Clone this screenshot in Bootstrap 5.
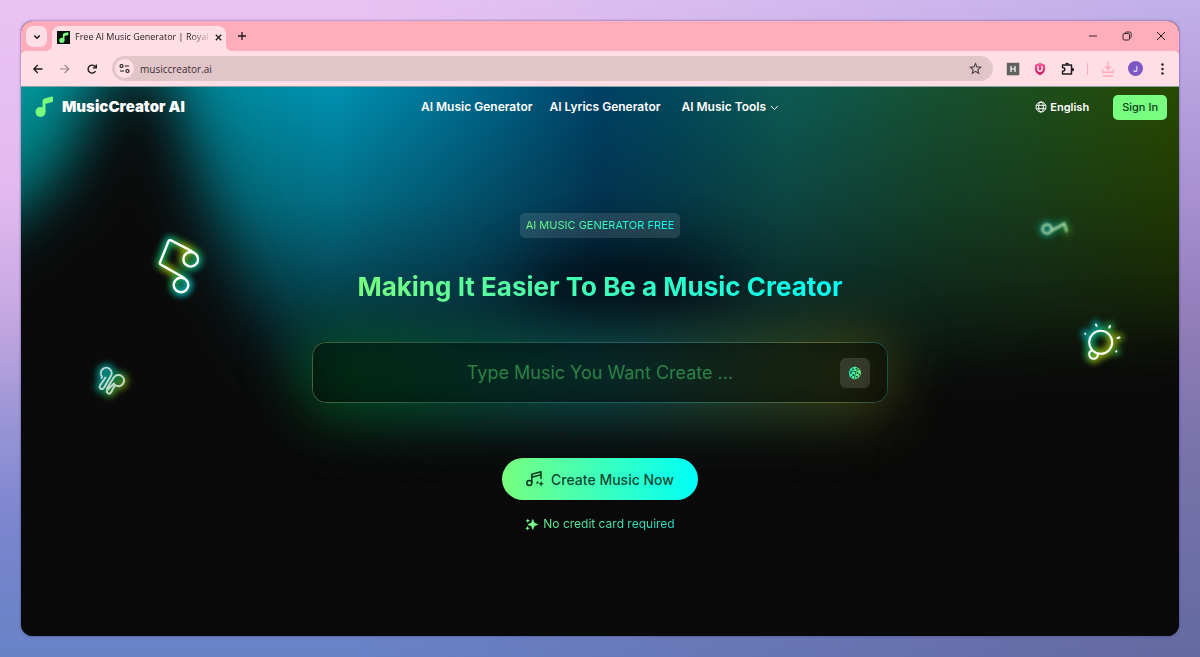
<!DOCTYPE html>
<html lang="en">
<head>
<meta charset="utf-8">
<meta name="viewport" content="width=device-width, initial-scale=1">
<title>Free AI Music Generator | Royalty Free</title>
<link href="https://cdn.jsdelivr.net/npm/bootstrap@5.3.0/dist/css/bootstrap.min.css" rel="stylesheet">
<style>
:root { --mint: #78ff7f; --aqua: #00fff7; --ink: #1d1b1e; }
body {
  position: relative; isolation: isolate; min-height: 100vh; padding: 21px;
  font-family: Inter, "Liberation Sans", sans-serif;
  background: linear-gradient(180deg, #e9c3f2 0%, #e3baef 28%, #c8a8e2 47%, #9a95d6 64%, #7b86cf 79%, #6882c6 100%);
}
body::before {
  content: ""; position: absolute; inset: 0; z-index: -1;
  background: linear-gradient(180deg, #c2b0ea 0%, #a890d2 30%, #8f7cb8 50%, #7873aa 70%, #646aa2 100%);
  -webkit-mask-image: linear-gradient(90deg, transparent 30%, #000 96%); mask-image: linear-gradient(90deg, transparent 30%, #000 96%);
}
button { color: inherit; }
.btn-plain { border: 0; background: none; padding: 0; line-height: 1; display: flex; align-items: center; justify-content: center; }
.app-window { min-height: calc(100vh - 42px); border-radius: 12px; background: #0a0a0a; box-shadow: 0 0 2px 1px rgba(70, 60, 120, .35); }

/* browser frame */
.tab-strip { height: 30px; background: #ffacbb; color: var(--ink); padding: 5px 5px 0; }
.tab-search { width: 21px; height: 21px; border-radius: 7px; background: #ffdfe5; }
.tab-open { position: relative; width: 174px; height: 25px; margin-left: 5px; padding: 0 7px 3px 5px; gap: 5px; border-radius: 8px 8px 0 0; background: #ffdfe5; }
.tab-open::before, .tab-open::after { content: ""; position: absolute; bottom: 0; width: 6px; height: 6px; }
.tab-open::before { left: -6px; background: radial-gradient(circle at 0 0, transparent 6px, #ffdfe5 6px); }
.tab-open::after { right: -6px; background: radial-gradient(circle at 100% 0, transparent 6px, #ffdfe5 6px); }
.tab-title { font: 9px/16px "Open Sans", sans-serif; white-space: nowrap; -webkit-mask-image: linear-gradient(90deg, #000 86%, transparent 102%); mask-image: linear-gradient(90deg, #000 86%, transparent 102%); }
.win-controls { gap: 22px; padding-right: 7px; height: 20px; }
.strip-wrap { background: #ffacbb; }
.tool-bar { height: 36px; padding: 0 9px 0 10px; background: #ffdfe5; color: var(--ink); border-bottom: 1px solid #8fa0a4; border-radius: 5px 5px 0 0; }
.nav-arrows { gap: 13px; margin-right: 13px; }
.address { height: 25px; border-radius: 13px; background: #e1c5c9; padding: 0 11px 0 3px; }
.address input { border: 0; background: none; padding: 0; outline: 0; font: 10px/16px "Open Sans", sans-serif; color: #3b3034; }
.site-info { width: 19px; height: 19px; border-radius: 50%; background: #ffdfe5; margin-right: 6px; }
.ext-row { margin-left: 13px; }
.ext-row > * { width: 14px; height: 16px; margin-right: 13px; }
.ext-row > *:last-child { margin-right: 0; }
.ext-row .bar { width: 1px; height: 12px; background: #ffacbb; }
.avatar { width: 15px !important; height: 15px !important; border-radius: 50%; background: #7e57c2; color: #fff; font-size: 8px; }

/* page */
.site { position: relative; color: #fff; isolation: isolate; overflow: hidden; }
.aurora { position: absolute; inset: 0; width: 100%; height: 100%; z-index: -1; }
.site-nav { height: 40px; padding: 0 12px 0 14px; font-size: 12px; font-weight: 600; }
.site-nav a { color: #fff; text-decoration: none; }
.brand { gap: 9px; font-size: 15px; line-height: 20px; font-weight: 900; }
.menu { gap: 17px; }
.lang { gap: 3px; margin-right: 24px; font-size: 11px; }
.sign-in { height: 25px; padding: 0 9px; border: 0; border-radius: 5px; background: var(--mint); color: #0d3d1c; font-size: 11px; font-weight: 500; }
.grad-text { background: linear-gradient(90deg, var(--mint), var(--aqua)); -webkit-background-clip: text; background-clip: text; color: transparent; }
.hero { padding: 86px 16px 0; }
.tag-pill { height: 25px; padding: 0 6px; border-radius: 5px; background: rgba(255, 255, 255, .12); font-size: 11px; line-height: 25px; }
.hero h1 { margin: 30px 0 0; font-size: 26px; line-height: 38px; font-weight: 700; }
.prompt { position: relative; width: 576px; max-width: 100%; height: 61px; margin-top: 36px; border-radius: 14px; background: rgba(0, 0, 0, .45); }
.prompt-edge { position: absolute; inset: 0; border-radius: 14px; padding: 1px; pointer-events: none;
  background: linear-gradient(90deg, #3f6538, #1d5c4a 30%, #1d6068 60%, #5e6430 90%, #17504e);
  -webkit-mask: linear-gradient(#000 0 0) content-box, linear-gradient(#000 0 0); -webkit-mask-composite: xor; mask-composite: exclude; }
.prompt input { border: 0; outline: 0; background: none; color: #9fffa8; font-size: 18px; padding: 0 18px 0 66px; }
.prompt input::placeholder { color: #2c8046; opacity: 1; }
.dice { width: 30px; height: 30px; margin-right: 18px; border-radius: 6px; background: rgba(255, 255, 255, .13); }
.glow { position: absolute; inset: -12px -4px -14px -8px; z-index: -1; filter: blur(28px); border-radius: 30px;
  background: linear-gradient(90deg, rgba(0, 90, 30, .8), rgba(14, 92, 90, .8) 50%, rgba(70, 70, 10, .85)); }
.cta { height: 42px; margin-top: 55px; padding: 0 24px; gap: 7px; border: 0; border-radius: 21px; background: linear-gradient(90deg, var(--mint), var(--aqua)); color: #0d4a34; font-size: 14px; font-weight: 500; }
.fine-note { margin-top: 15px; gap: 5px; font-size: 12px; line-height: 18px; }
.fine-note span { background-image: linear-gradient(90deg, #6df59a, #22dccb); }

/* neon ornaments over the backdrop */
.floater { position: absolute; overflow: visible; pointer-events: none; fill: none; stroke-linecap: round; stroke-linejoin: round; }
.floater .halo { stroke: url(#neon); stroke-width: 8; filter: url(#halo); }
.floater .line { stroke: #fff; stroke-width: 2; }
.fl-notes { left: 10.7%; top: 25.2%; }
.fl-notes .line { stroke-width: 2.4; }
.fl-buds { left: 6%; top: 49.3%; }
.fl-key { right: 9.3%; top: 23.3%; }
.fl-key .line { stroke: #d5f5c0; stroke-width: 2.6; }
.fl-bulb { right: 4.7%; top: 41.4%; }
</style>
</head>
<body>
<svg width="0" height="0" class="position-absolute" aria-hidden="true">
  <defs>
    <linearGradient id="neon" gradientUnits="userSpaceOnUse" x1="4" y1="28" x2="24" y2="44" spreadMethod="reflect"><stop offset="0" stop-color="#00b4c0"/><stop offset=".5" stop-color="#12a050"/><stop offset="1" stop-color="#a4b000"/></linearGradient>
    <linearGradient id="mintAqua" x1="0" y1="0" x2="1" y2="0"><stop offset="0" stop-color="#2df5c0"/><stop offset="1" stop-color="#78ff7f"/></linearGradient>
    <filter id="halo" filterUnits="userSpaceOnUse" x="-30" y="-30" width="140" height="140" color-interpolation-filters="sRGB"><feGaussianBlur stdDeviation="3"/></filter>
    <filter id="soft" filterUnits="userSpaceOnUse" x="-20" y="-20" width="90" height="90" color-interpolation-filters="sRGB"><feGaussianBlur stdDeviation=".5"/></filter>
    <filter id="softer" filterUnits="userSpaceOnUse" x="-20" y="-20" width="90" height="90" color-interpolation-filters="sRGB"><feGaussianBlur stdDeviation="1.300"/></filter>
    <g id="note"><circle cx="5.500" cy="16" r="5"/><path d="M7.500 16V5Q7.500 3 9.500 2.500L16.500 .6Q18 .3 18 2V4.600Q18 6 16.500 6.300L10.500 7.800V16Z"/></g>
    <g id="beam"><path d="M46.500 26 26 15.400Q24.300 14.500 23.500 16.300L15 37.500Q14.500 39 16 39.700L38.500 52.500"/><circle cx="45.700" cy="34.300" r="7.300"/><circle cx="36" cy="60" r="7.300"/></g>
    <g id="buds"><path d="M15.500 19.500 10 27.500A2.200 2.200 0 0 0 13.800 30L20.500 18.500A5.400 5.400 0 1 0 12 18.500L11.500 20"/><path d="M24 25.500 17.300 32A2.200 2.200 0 0 0 21 34.500L25 27A5.600 5.600 0 1 0 23.800 19.500L17 30.500"/></g>
    <g id="keynote"><circle cx="16" cy="14" r="4.500"/><path d="M20 16 33.500 8.500 35.500 16"/></g>
    <g id="bulb"><circle cx="25.700" cy="28.300" r="11.500"/><path d="M16.800 36.500A4.300 4.300 0 1 0 22.800 40.500"/></g>
    <g id="rays"><path d="M21 10.500 21.600 12M35 12 34.300 13.500M42.500 24 44.500 23.500"/><path d="M10.200 19.700V19.800M41.300 37.300V37.400"/></g>
  </defs>
</svg>

<div class="app-window d-flex flex-column overflow-hidden">
  <header>
    <div class="tab-strip d-flex align-items-start">
      <button class="btn-plain tab-search" aria-label="Search tabs"><svg width="8" height="8" viewBox="0 0 8 8" fill="none" stroke="currentColor" stroke-width="1.500"><path d="M1.200 2.500 4 5.300 6.800 2.500"/></svg></button>
      <div class="tab-open d-flex align-items-center">
        <svg width="13" height="13" viewBox="0 0 13 13" class="flex-shrink-0"><rect width="13" height="13" fill="#06120a"/><g fill="#78ff7f" transform="translate(2 1) scale(.52)"><use href="#note"/></g></svg>
        <span class="tab-title">Free AI Music Generator | Royal</span>
        <button class="btn-plain ms-auto" aria-label="Close tab"><svg width="9" height="9" viewBox="0 0 9 9" stroke="currentColor" stroke-width="1.300"><path d="M1.800 1.800 7.200 7.200M7.200 1.800 1.800 7.200"/></svg></button>
      </div>
      <button class="btn-plain mt-1 ms-2 px-1" aria-label="New tab"><svg width="8" height="13" viewBox="0 0 8 13" stroke="currentColor" stroke-width="1.300"><path d="M4 2V10M0 6H8"/></svg></button>
      <div class="win-controls d-flex align-items-center ms-auto">
        <button class="btn-plain" aria-label="Minimize"><svg width="12" height="12" viewBox="0 0 12 12" stroke="currentColor" stroke-width=".9"><path d="M2 6H10"/></svg></button>
        <button class="btn-plain" aria-label="Restore"><svg width="12" height="12" viewBox="0 0 12 12" fill="none" stroke="currentColor" stroke-width=".9"><rect x="2" y="3.500" width="6.500" height="6.500" rx="1.200"/><path d="M4 3.300Q4.200 2 5.500 2H8.500Q10.200 2 10.200 3.700V6.500Q10.200 8 8.800 8.300"/></svg></button>
        <button class="btn-plain" aria-label="Close"><svg width="12" height="12" viewBox="0 0 12 12" stroke="currentColor"><path d="M2 2 10 10M10 2 2 10"/></svg></button>
      </div>
    </div>
    <div class="strip-wrap">
      <div class="tool-bar d-flex align-items-center">
        <div class="nav-arrows d-flex align-items-center">
          <button class="btn-plain" aria-label="Back"><svg width="14" height="14" viewBox="0 0 14 14" fill="none" stroke="currentColor" stroke-width="1.300"><path d="M11.500 7H3M6.800 3 2.800 7 6.800 11"/></svg></button>
          <button class="btn-plain" aria-label="Forward"><svg width="14" height="14" viewBox="0 0 14 14" fill="none" stroke="#9d858b" stroke-width="1.200"><path d="M2 7H10.500M6.700 3 10.700 7 6.700 11"/></svg></button>
          <button class="btn-plain" aria-label="Reload"><svg width="14" height="14" viewBox="0 0 14 14" fill="none" stroke="currentColor" stroke-width="1.400"><path d="M10.600 9A4 4 0 1 1 10.300 4.700L11 5.600"/><path d="M11.300 2.500V5.900H7.900"/></svg></button>
        </div>
        <div class="address d-flex align-items-center flex-grow-1">
          <button class="btn-plain site-info flex-shrink-0" aria-label="Site information"><svg width="11" height="11" viewBox="0 0 11 11" fill="none" stroke="currentColor" stroke-width="1.200"><circle cx="2.500" cy="3" r="1.500"/><path d="M5.800 3H10M1 8H5.200"/><circle cx="8.500" cy="8" r="1.500"/></svg></button>
          <input class="flex-grow-1" type="text" value="musiccreator.ai" aria-label="Address">
          <button class="btn-plain" aria-label="Bookmark"><svg width="13" height="13" viewBox="0 0 13 13" fill="none" stroke="#4c4246" stroke-width="1.100"><path d="M6.500 1.500 8 4.900 11.700 5.200 8.900 7.700 9.700 11.300 6.500 9.400 3.300 11.300 4.100 7.700 1.300 5.200 5 4.900Z"/></svg></button>
        </div>
        <div class="ext-row d-flex align-items-center">
          <button class="btn-plain" aria-label="H extension"><svg width="14" height="14" viewBox="0 0 14 14"><rect x=".8" y=".8" width="12.500" height="12.500" fill="#616161"/><path d="M5 4V10M9 4V10M5 7H9" stroke="#fff" stroke-width="1.200"/></svg></button>
          <button class="btn-plain" aria-label="Shield extension"><svg width="14" height="14" viewBox="0 0 14 14"><defs><linearGradient id="shield" x1="0" y1="0" x2="0" y2="1"><stop offset="0" stop-color="#ff5f9a"/><stop offset="1" stop-color="#c8145c"/></linearGradient></defs><path d="M7 .8 12 2.800V7.500Q11.800 11 7 13.300 2.200 11 2 7.500V2.800Z" fill="url(#shield)"/><path d="M5 4V7.200A2 2 0 0 0 9 7.200V4" fill="none" stroke="#fff" stroke-width="1.300"/></svg></button>
          <button class="btn-plain" aria-label="Extensions"><svg width="14" height="14" viewBox="0 0 14 14" fill="none" stroke="currentColor" stroke-width="1.400" stroke-linejoin="round"><path d="M2.500 3H11.500V12H2.500V9.300Q4.800 9 4.800 7.400 4.800 5.700 2.500 5.500Z"/><path d="M6 2.300A1.200 1.200 0 0 1 8.100 2.300M12.200 6.300A1.200 1.200 0 0 1 12.200 8.600" stroke-width="1.900"/></svg></button>
          <span class="bar"></span>
          <button class="btn-plain" aria-label="Downloads"><svg width="14" height="16" viewBox="0 0 14 16" fill="none" stroke="#ffacbb" stroke-width="1.500"><path d="M7 1V8M3.800 5.200 7 8.400 10.200 5.200M1.700 8.500V11.300H12.300V8.500M2 15H12"/></svg></button>
          <button class="btn-plain avatar" aria-label="Profile">J</button>
          <button class="btn-plain" aria-label="Menu"><svg width="14" height="14" viewBox="0 0 14 14" fill="currentColor"><circle cx="6.500" cy="2.500" r="1.200"/><circle cx="6.500" cy="7" r="1.200"/><circle cx="6.500" cy="11.500" r="1.200"/></svg></button>
        </div>
      </div>
    </div>
  </header>

  <div class="site flex-grow-1">
    <svg class="aurora" viewBox="0 0 1158 550" preserveAspectRatio="none" aria-hidden="true">
      <defs>
        <linearGradient id="sky" x1="0" x2="1" y1="0" y2="0">
          <stop offset="0" stop-color="#009498"/><stop offset=".1" stop-color="#00808a"/><stop offset=".27" stop-color="#0091b0"/><stop offset=".36" stop-color="#007497"/><stop offset=".5" stop-color="#004166"/><stop offset=".57" stop-color="#034a5c"/><stop offset=".66" stop-color="#0d5a54"/><stop offset=".8" stop-color="#17502f"/><stop offset="1" stop-color="#284a00"/>
        </linearGradient>
        <linearGradient id="fall" x1="0" x2="0" y1="0" y2="1">
          <stop offset="0" stop-color="#0a0a0a" stop-opacity="0"/><stop offset=".2" stop-color="#0a0a0a" stop-opacity=".25"/><stop offset=".4" stop-color="#0a0a0a" stop-opacity=".62"/><stop offset=".58" stop-color="#0a0a0a" stop-opacity=".94"/><stop offset=".68" stop-color="#0a0a0a"/>
        </linearGradient>
        <filter id="haze" filterUnits="userSpaceOnUse" x="-300" y="-300" width="1800" height="1200" color-interpolation-filters="sRGB"><feGaussianBlur stdDeviation="30"/></filter>
      </defs>
      <rect width="1158" height="550" fill="url(#sky)"/>
      <rect width="1158" height="550" fill="url(#fall)"/>
      <g filter="url(#haze)" fill="#0a0a0a">
        <path d="M-200 800V210Q15 170 60 50 85 -30 115 -30 145 -30 165 50 205 190 270 300L380 420 1400 420V800Z"/>
        <path d="M830 800V310Q1000 240 1400 270V800Z"/>
      </g>
      <ellipse cx="610" cy="205" rx="110" ry="36" fill="#02070f" opacity=".85" filter="url(#haze)"/>
    </svg>

    <nav class="site-nav d-flex align-items-center justify-content-between position-relative">
      <a href="#" class="brand d-flex align-items-center"><svg width="18" height="22" viewBox="0 0 18 22" fill="#78ff7f"><use href="#note"/></svg>MusicCreator AI</a>
      <div class="menu d-flex align-items-center position-absolute top-50 start-50 translate-middle text-nowrap">
        <a href="#">AI Music Generator</a>
        <a href="#">AI Lyrics Generator</a>
        <a href="#" class="d-flex align-items-center gap-1 ms-1">AI Music Tools <svg width="9" height="9" viewBox="0 0 9 9" fill="none" stroke="currentColor"><path d="M1 3 4.500 6.300 8 3"/></svg></a>
      </div>
      <div class="d-flex align-items-center">
        <a href="#" class="lang d-flex align-items-center"><svg width="12" height="12" viewBox="0 0 12 12" fill="none" stroke="currentColor"><circle cx="6" cy="6" r="5"/><ellipse cx="6" cy="6" rx="2.300" ry="5"/><path d="M1.500 4.300H10.500M1.500 7.700H10.500"/></svg>English</a>
        <button class="sign-in">Sign In</button>
      </div>
    </nav>

    <main class="hero d-flex flex-column align-items-center text-center">
      <div class="tag-pill"><span class="grad-text">AI MUSIC GENERATOR FREE</span></div>
      <h1 class="grad-text">Making It Easier To Be a Music Creator</h1>
      <form class="prompt d-flex align-items-center" onsubmit="return false">
        <span class="glow"></span><span class="prompt-edge"></span>
        <input class="flex-grow-1 text-center w-100" type="text" placeholder="Type Music You Want Create ..." aria-label="Music description">
        <button type="button" class="btn-plain dice flex-shrink-0" aria-label="Random prompt"><svg width="14" height="14" viewBox="0 0 14 14"><path d="M7 .6 12 3 13.200 8 10.500 12 6 13.400 1.800 11 .8 5.500 3 2Z" fill="url(#mintAqua)"/><path d="M1 5 7.500 5.500 12 3M7.500 5.500 6.500 13" stroke="#123c2a" stroke-width=".8" fill="none"/><g fill="#0b3824"><ellipse cx="5" cy="3.300" rx="1.200" ry=".8"/><ellipse cx="8.600" cy="2.700" rx="1.200" ry=".8"/><circle cx="3" cy="7" r=".9"/><circle cx="5.200" cy="9" r=".9"/><circle cx="3.500" cy="10.800" r=".8"/><circle cx="9.500" cy="7" r=".9"/><circle cx="11.500" cy="8.500" r=".9"/><circle cx="9" cy="10.700" r=".9"/></g></svg></button>
      </form>
      <button class="cta d-flex align-items-center"><svg width="18" height="18" viewBox="0 0 18 18" fill="none" stroke="#07391f" stroke-width="1.500" stroke-linejoin="round"><circle cx="3.300" cy="13" r="2.500"/><path d="M5.800 13V4.200L15 1.700V9M5.800 7.300 15 4.800M12.300 11.800A2 2 0 0 0 11 13.700"/><path d="M15.200 10.800 16 13 18 13.800 16 14.600 15.200 16.800 14.400 14.600 12.400 13.800 14.400 13Z" fill="#07391f" stroke="none"/></svg>Create Music Now</button>
      <div class="fine-note d-flex align-items-center"><svg width="13" height="13" viewBox="0 0 13 13" fill="#78ff8c"><path d="M7.800 1.500 9.200 5.100 12.800 6.500 9.200 7.900 7.800 11.500 6.400 7.900 2.800 6.500 6.400 5.100Z" stroke="#78ff8c" stroke-width=".6"/><path d="M2.800.5 3.400 2 5 2.700 3.400 3.400 2.800 5 2.200 3.400.6 2.700 2.200 2ZM2.500 8 3.100 9.600 4.700 10.300 3.100 11 2.500 12.600 1.900 11 .3 10.300 1.900 9.600Z"/></svg><span class="grad-text">No credit card required</span></div>
    </main>

    <svg class="floater fl-notes" width="60" height="75" viewBox="0 0 60 75" aria-hidden="true"><use href="#beam" class="halo"/><use href="#beam" class="line"/></svg>
    <svg class="floater fl-buds" width="45" height="45" viewBox="0 0 45 45" aria-hidden="true"><use href="#buds" class="halo" opacity=".75"/><use href="#buds" class="line" filter="url(#soft)" opacity=".72"/></svg>
    <svg class="floater fl-key" width="40" height="30" viewBox="0 0 40 30" aria-hidden="true"><use href="#keynote" class="halo" opacity=".5"/><use href="#keynote" class="line" filter="url(#softer)" opacity=".75"/></svg>
    <svg class="floater fl-bulb" width="50" height="50" viewBox="0 0 50 50" aria-hidden="true"><use href="#bulb" class="halo"/><use href="#rays" class="halo" opacity=".8"/><use href="#bulb" class="line"/><use href="#rays" class="line"/></svg>
  </div>
</div>
<script src="https://cdn.jsdelivr.net/npm/bootstrap@5.3.0/dist/js/bootstrap.bundle.min.js"></script>
</body>
</html>
